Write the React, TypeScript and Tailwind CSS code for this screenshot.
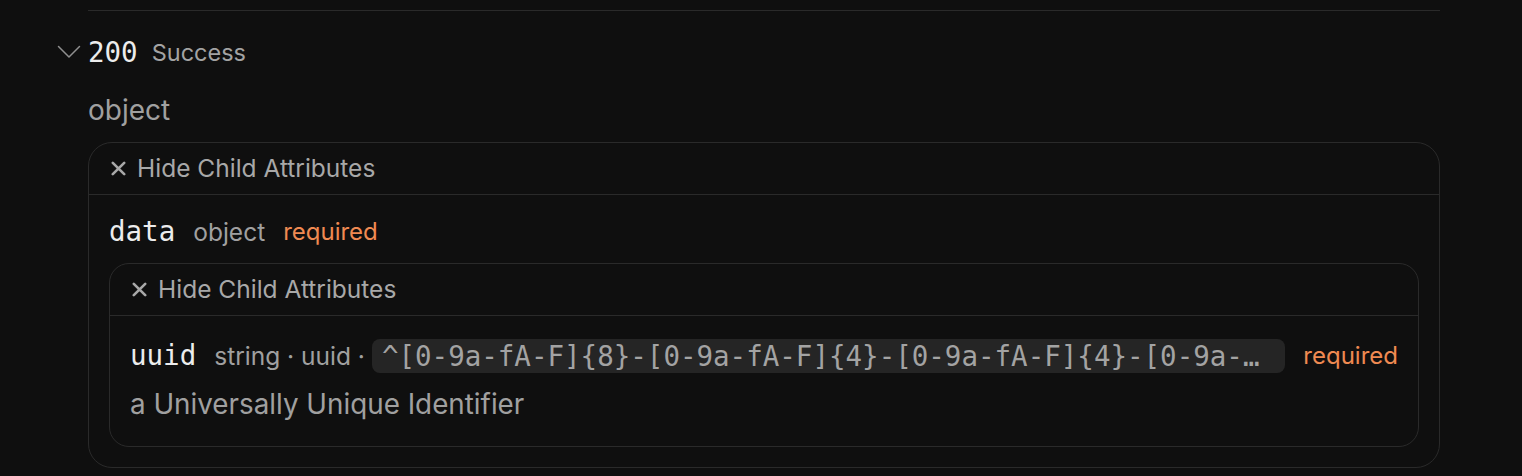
import React from "react";

const sans = { fontFamily: 'Inter, "Noto Sans", sans-serif' } as const;

function Chevron() {
  return (
    <svg width="24" height="14" viewBox="0 0 24 14" fill="none" className="shrink-0">
      <path d="M1.5 1.5 L12 12 L22.5 1.5" stroke="#8f8f8f" strokeWidth="1.5" strokeLinecap="round" strokeLinejoin="round" />
    </svg>
  );
}

function HideHeader() {
  return (
    <div className="flex h-[52px] items-center gap-[11px] border-b border-[#2a2a2a] pl-[22px] text-[24.5px] text-[#a8a8a8]">
      <svg width="15" height="15" viewBox="0 0 15 15" fill="none" className="shrink-0">
        <path d="M1.8 1.8 L13.2 13.2 M13.2 1.8 L1.8 13.2" stroke="#a8a8a8" strokeWidth="2.6" strokeLinecap="round" />
      </svg>
      <span>Hide Child Attributes</span>
    </div>
  );
}

export default function App() {
  return (
    <div className="min-h-[476px] w-[1522px] overflow-hidden bg-[#0f0f0f]" style={sans}>
      <div className="ml-[88px] w-[1352px] pt-[10px]">
        <div className="h-px w-full bg-[#2a2a2a]" />
        <div className="relative mt-[24px] flex h-[36px] items-center gap-[14px]">
          <div className="absolute left-[-31px] top-[10px]">
            <Chevron />
          </div>
          <span className="font-['DejaVu_Sans_Mono',monospace] text-[27.5px] text-[#ececec]">200</span>
          <span className="text-[23.5px] text-[#a3a3a3]">Success</span>
        </div>
        <div className="mt-[18px] flex h-[42px] items-center text-[28px] text-[#a0a0a0]">object</div>
        <div className="mt-[11px] rounded-[24px] border border-[#2a2a2a]">
          <HideHeader />
          <div className="px-[20px] pb-[20px] pt-[19px]">
            <div className="flex h-[36px] items-center gap-[18px] whitespace-nowrap">
              <span className="font-['DejaVu_Sans_Mono',monospace] text-[27.5px] text-[#ececec]">data</span>
              <span className="text-[24.5px] text-[#a0a0a0]">object</span>
              <span className="text-[24px] text-[#f08a52]">required</span>
            </div>
            <div className="mt-[13px] rounded-[20px] border border-[#2a2a2a]">
              <HideHeader />
              <div className="px-[20px] pb-[20px] pt-[22px]">
                <div className="flex h-[36px] items-center whitespace-nowrap">
                  <span className="font-['DejaVu_Sans_Mono',monospace] text-[27.5px] text-[#ececec]">uuid</span>
                  <span className="ml-[18px] text-[24.5px] text-[#a0a0a0]">string · uuid ·</span>
                  <span className="ml-[7px] min-w-0 truncate rounded-[8px] bg-[#252525] py-[1px] pl-[10px] pr-[12px] font-['DejaVu_Sans_Mono',monospace] text-[27.5px] leading-[32px] text-[#a3a3a3]">
                    ^[0-9a-fA-F]{"{8}"}-[0-9a-fA-F]{"{4}"}-[0-9a-fA-F]{"{4}"}-[0-9a-fA-F]{"{4}"}-[0-9a-fA-F]{"{12}"}$
                  </span>
                  <span className="ml-[18px] shrink-0 text-[24px] text-[#f08a52]">required</span>
                </div>
                <div className="mt-[10px] flex h-[42px] items-center text-[27.8px] text-[#a0a0a0]">a Universally Unique Identifier</div>
              </div>
            </div>
          </div>
        </div>
      </div>
    </div>
  );
}
